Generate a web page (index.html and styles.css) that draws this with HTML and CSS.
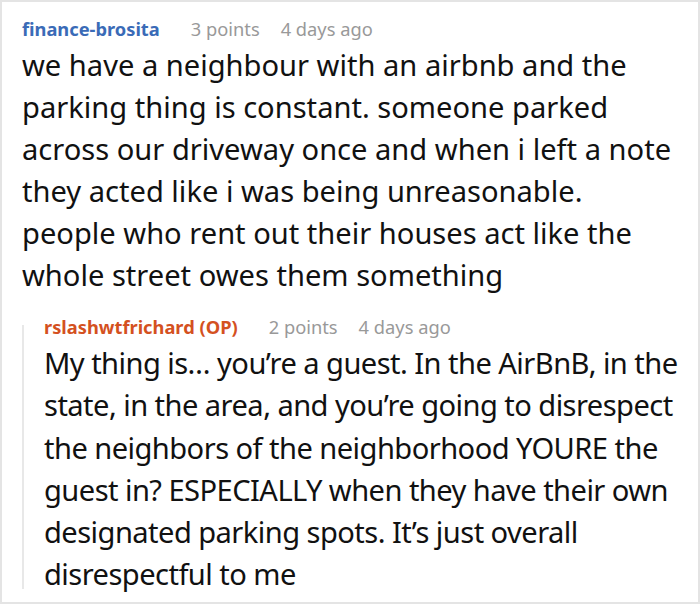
FILE: index.html
```html
<!DOCTYPE html>
<html>
<head>
<meta charset="utf-8">
<link rel="stylesheet" href="styles.css">
</head>
<body>
<div class="card">
  <div class="comment">
    <div class="meta">
      <span class="author">finance-brosita</span>
      <span class="info">3 points</span>
      <span class="info">4 days ago</span>
    </div>
    <p class="text">we have a neighbour with an airbnb and the parking thing is constant. someone parked across our driveway once and when i left a note they acted like i was being unreasonable. people who rent out their houses act like the whole street owes them something</p>
    <div class="reply">
      <div class="meta">
        <span class="author op">rslashwtfrichard (OP)</span>
        <span class="info">2 points</span>
        <span class="info">4 days ago</span>
      </div>
      <p class="text reply-text">My thing is… you’re a guest. In the AirBnB, in the state, in the area, and you’re going to disrespect the neighbors of the neighborhood YOURE the guest in? ESPECIALLY when they have their own designated parking spots. It’s just overall disrespectful to me</p>
    </div>
  </div>
</div>
</body>
</html>
```

FILE: styles.css
```css
html, body {
  margin: 0;
  padding: 0;
  background: #fff;
}
.card {
  box-sizing: border-box;
  width: 700px;
  height: 604px;
  border: 2px solid #e4e4e4;
  overflow: hidden;
  font-family: "Noto Sans", "Open Sans", sans-serif;
}
.comment {
  padding: 11px 20px 0 20px;
}
.meta {
  display: flex;
  gap: 21px;
  font-size: 18.3px;
  line-height: 31px;
}
.author {
  color: #3a6bb7;
  font-weight: 700;
  margin-right: 10px;
}
.author.op {
  color: #d4511f;
}
.info {
  color: #999;
}
.text {
  margin: 0;
  font-size: 29.1px;
  line-height: 42px;
  color: #111;
}
.reply-text {
  letter-spacing: -0.55px;
  line-height: 42.3px;
}
.reply {
  position: relative;
  margin-top: 15px;
  padding-left: 22px;
}
.reply::before {
  content: "";
  position: absolute;
  left: 0;
  top: 14px;
  bottom: 7px;
  width: 2px;
  background: #e8e8e8;
}
```
